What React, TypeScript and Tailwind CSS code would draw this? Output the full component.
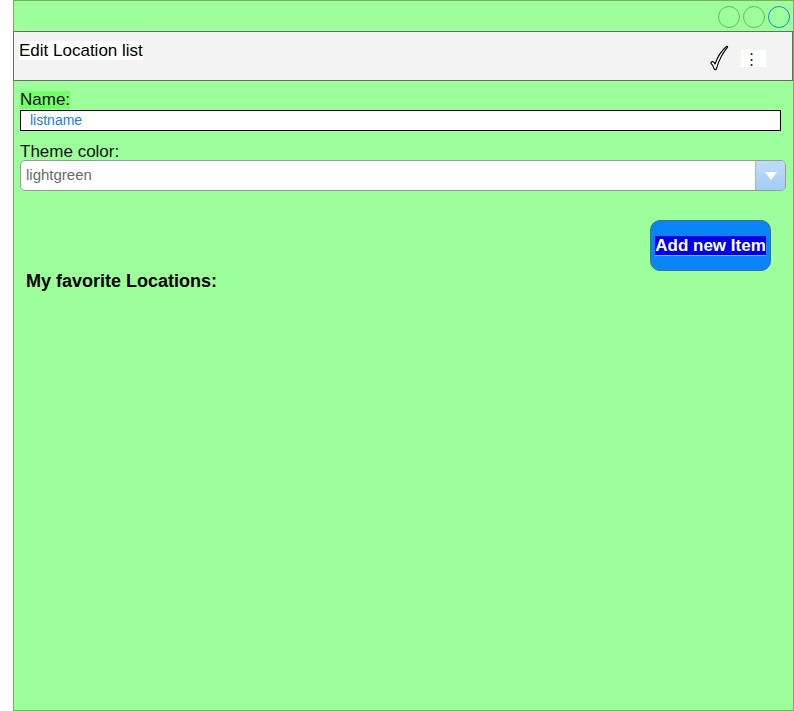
import React from 'react';

function Circle({ blue }: { blue?: boolean }) {
  return (
    <div className={`w-[22px] h-[22px] rounded-full border ${blue ? 'border-[#1a8ad8]' : 'border-[#6fb85a]'}`}></div>
  );
}

function Check() {
  return (
    <svg width="20" height="26" viewBox="0 0 20 26" className="block">
      <path
        d="M2 17.5 C3.5 16 5 16.5 6 19 C8.5 12 12 6 17.5 1.5 C18.5 1 19 1.8 18.3 2.6 C13.5 8 10 15 7.5 23.5 C7 25 5.5 25 5 23.5 C4.5 21.5 3.5 19.5 2 18.5 Z"
        fill="#fff"
        stroke="#000"
        strokeWidth="1.1"
        strokeLinejoin="round"
      />
    </svg>
  );
}

export default function App() {
  return (
    <div className="w-[794px] h-[711px] bg-white font-['Liberation_Sans',Arial,sans-serif]">
      <div className="ml-[13px] w-[781px] h-[711px] border border-[#7aaf5e] bg-[#9cff9c] flex flex-col">
        <div className="h-[30px] flex items-center justify-end gap-[3px] pr-[3px] pt-[1px]">
          <Circle />
          <Circle />
          <Circle blue />
        </div>

        <div className="h-[50px] -ml-px border border-[#6b6b6b] bg-[#f3f3f3] flex items-start">
          <span className="ml-[5px] mt-[9px] bg-white text-[17px] leading-[19px] text-black">Edit Location list</span>
          <div className="ml-auto mt-[13px] flex items-start">
            <Check />
            <div className="ml-[12px] mt-[5px] w-[25px] h-[17px] bg-white flex items-center pl-[3px] text-[15px] leading-none text-[#222]">⋮</div>
            <div className="w-[26px]"></div>
          </div>
        </div>

        <div className="flex flex-col px-[6px] pt-[10px]">
          <span className="self-start bg-[#74ff6a] text-[17px] leading-[18px] text-[#111]">Name:</span>
          <div className="mt-[1px] w-[761px] h-[21px] border border-black bg-white flex items-center pl-[9px] text-[14px] text-[#1a7fe0]">listname</div>
          <span className="mt-[12px] text-[17px] leading-[18px] text-[#111]">Theme color:</span>
          <div className="mt-[-1px] w-[766px] h-[31px] border border-[#9a9a9a] rounded-[5px] bg-white flex items-stretch overflow-hidden">
            <span className="flex-1 flex items-center pl-[5px] text-[15px] text-[#6a6a6a]">lightgreen</span>
            <div className="w-[30px] border-l border-[#a8b8c8] bg-gradient-to-b from-[#bfdcfa] to-[#a5cdf4] flex items-center justify-center">
              <svg width="14" height="10" viewBox="0 0 14 10">
                <path d="M1 1 L13 1 L7 9 Z" fill="#fff" />
              </svg>
            </div>
          </div>

          <div className="mt-[29px] flex justify-end pr-[16px]">
            <button className="w-[121px] h-[51px] rounded-[10px] border border-[#3a6fa0] bg-[#0b84f5] flex items-center justify-center">
              <span className="bg-[#0000e6] text-white font-bold text-[17px] leading-[19px] border-b border-[#7fb0ff]">Add new Item</span>
            </button>
          </div>
          <span className="ml-[6px] mt-[0px] font-bold text-[18px] leading-[21px] text-black">My favorite Locations:</span>
        </div>
      </div>
    </div>
  );
}
